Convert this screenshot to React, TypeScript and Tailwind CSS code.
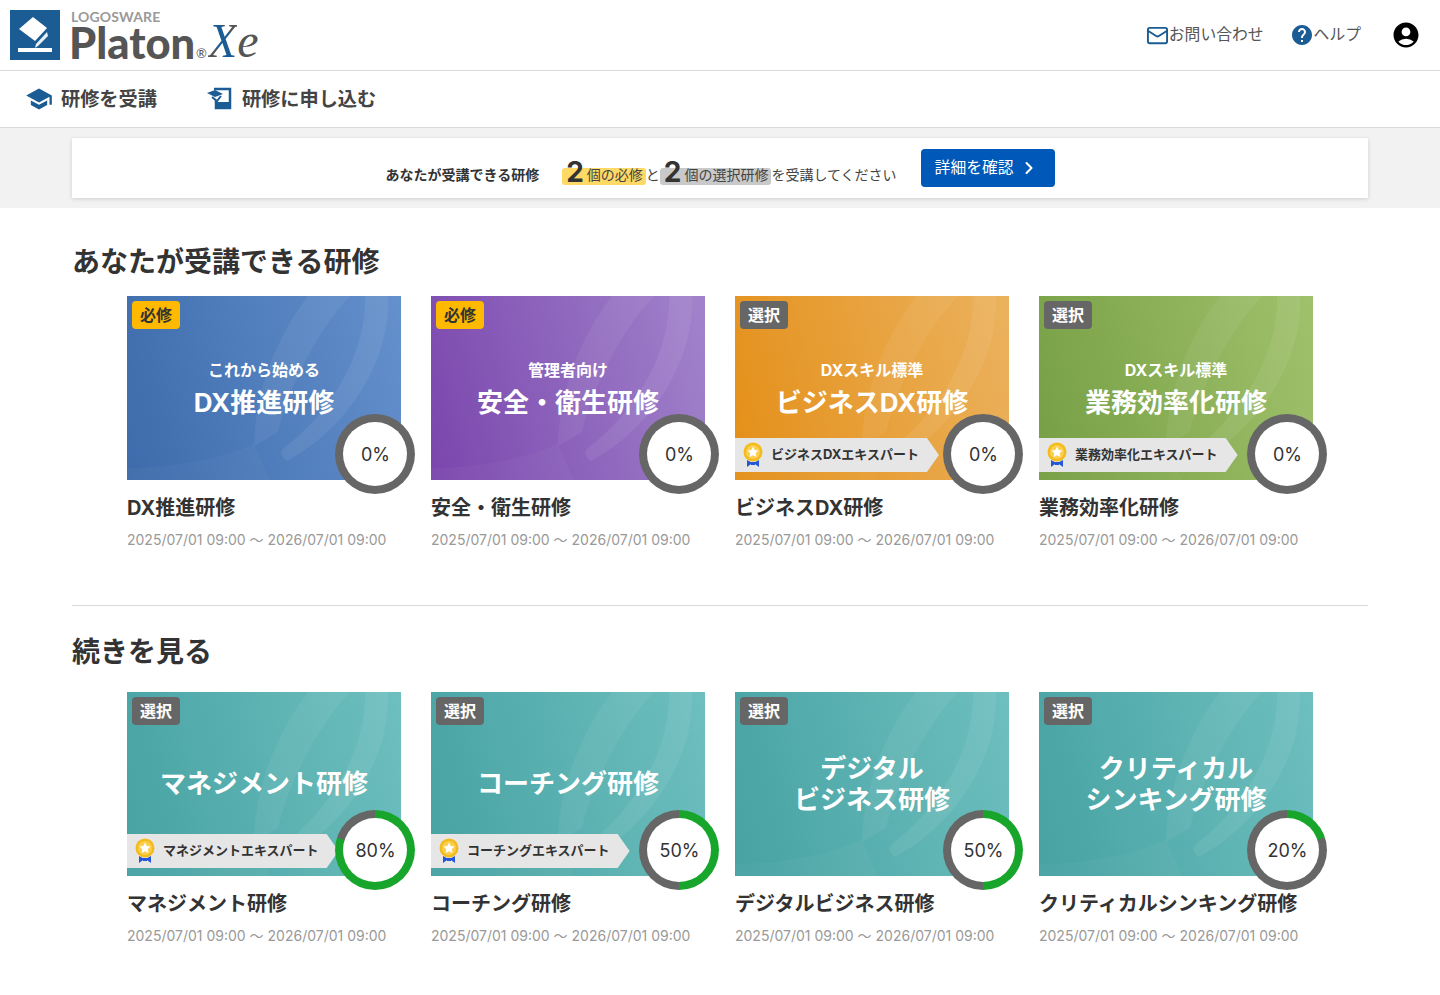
import { Mail, ChevronRight } from 'lucide-react';
import { MdAccountCircle, MdHelp, MdSchool } from 'react-icons/md';

const FONT = "font-['Inter','Noto_Sans_CJK_JP',sans-serif]";
const PERIOD = '2025/07/01 09:00 〜 2026/07/01 09:00';

type Course = {
  kind: '必修' | '選択';
  sub?: string;
  hero: string[];
  expert?: string;
  progress: number;
  title: string;
  gradient: string;
};

const available: Course[] = [
  { kind: '必修', sub: 'これから始める', hero: ['DX推進研修'], progress: 0, title: 'DX推進研修', gradient: 'from-[#3d6bab] to-[#6490cc]' },
  { kind: '必修', sub: '管理者向け', hero: ['安全・衛生研修'], progress: 0, title: '安全・衛生研修', gradient: 'from-[#7a46ad] to-[#a183cb]' },
  { kind: '選択', sub: 'DXスキル標準', hero: ['ビジネスDX研修'], expert: 'ビジネスDXエキスパート', progress: 0, title: 'ビジネスDX研修', gradient: 'from-[#e48f18] to-[#ebb25e]' },
  { kind: '選択', sub: 'DXスキル標準', hero: ['業務効率化研修'], expert: '業務効率化エキスパート', progress: 0, title: '業務効率化研修', gradient: 'from-[#769f44] to-[#a0c16c]' },
];

const resume: Course[] = [
  { kind: '選択', hero: ['マネジメント研修'], expert: 'マネジメントエキスパート', progress: 80, title: 'マネジメント研修', gradient: 'from-[#47a2a2] to-[#6ebfbf]' },
  { kind: '選択', hero: ['コーチング研修'], expert: 'コーチングエキスパート', progress: 50, title: 'コーチング研修', gradient: 'from-[#47a2a2] to-[#6ebfbf]' },
  { kind: '選択', hero: ['デジタル', 'ビジネス研修'], progress: 50, title: 'デジタルビジネス研修', gradient: 'from-[#47a2a2] to-[#6ebfbf]' },
  { kind: '選択', hero: ['クリティカル', 'シンキング研修'], progress: 20, title: 'クリティカルシンキング研修', gradient: 'from-[#47a2a2] to-[#6ebfbf]' },
];

const Swoosh = () => (
  <svg className="absolute inset-0 w-full h-full" viewBox="0 0 274 184" fill="white">
    <path d="M181 0 H223 C190 35 162 90 151 136 L127 150 C128 95 150 40 181 0 Z" fillOpacity="0.06" />
    <path d="M238 0 H261 C264 60 225 130 160 165 C154 160 152 156 157 152 C200 120 240 60 238 0 Z" fillOpacity="0.07" />
    <path d="M0 172 C50 172 95 162 127 148 L143 184 H0 Z" fillOpacity="0.03" />
  </svg>
);

const Medal = () => (
  <svg width="20" height="26" viewBox="0 0 20 26" className="shrink-0">
    <path d="M4 18 L9.5 21 L4 25 Z M16 18 L10.5 21 L16 25 Z" fill="#2456d6" />
    <path d="M8 20 H12 V23 H8 Z" fill="#2456d6" />
    <circle cx="10" cy="10" r="9.5" fill="#f4bb1d" />
    <circle cx="10" cy="10" r="7" fill="#fbcf4e" />
    <path d="M10 4.6 L11.7 8.1 L15.5 8.6 L12.7 11.2 L13.4 15 L10 13.2 L6.6 15 L7.3 11.2 L4.5 8.6 L8.3 8.1 Z" fill="white" />
  </svg>
);

const ProgressRing = ({ value }: { value: number }) => (
  <div
    className="absolute right-[-14px] bottom-[-14px] w-20 h-20 rounded-full flex items-center justify-center"
    style={{ background: `conic-gradient(#17a62b ${value * 3.6}deg, #666666 ${value * 3.6}deg)` }}
  >
    <div className="w-16 h-16 rounded-full bg-white flex items-center justify-center text-[18px] text-[#333] pl-px">
      {value}%
    </div>
  </div>
);

const CourseCard = ({ course }: { course: Course }) => (
  <div>
    <div className={`relative h-[184px] bg-linear-[75deg] ${course.gradient}`}>
      <Swoosh />
      <span
        className={`absolute left-[5px] top-[5px] w-12 h-7 rounded flex items-center justify-center text-[16px] font-bold ${
          course.kind === '必修' ? 'bg-[#ffb900] text-[#333]' : 'bg-[#666] text-white'
        }`}
      >
        {course.kind}
      </span>
      <div className={`absolute inset-x-0 text-center text-white ${course.sub ? 'top-[62px]' : course.hero.length > 1 ? 'top-[61px]' : 'top-[76px]'}`}>
        {course.sub && <div className="text-[16px] font-bold leading-6 mb-[5px]">{course.sub}</div>}
        {course.hero.map((line) => (
          <div key={line} className="text-[26px] font-bold leading-[31px]">
            {line}
          </div>
        ))}
      </div>
      {course.expert && (
        <div className="absolute left-0 bottom-2 h-[34px] pl-2 pr-5 flex items-center gap-2 bg-[#e6e6e6] text-[13px] font-bold text-[#333] [clip-path:polygon(0_0,calc(100%-12px)_0,100%_50%,calc(100%-12px)_100%,0_100%)]">
          <Medal />
          {course.expert}
        </div>
      )}
      <ProgressRing value={course.progress} />
    </div>
    <h3 className="mt-[14px] text-[20px] font-bold leading-7 text-[#333]">{course.title}</h3>
    <p className="mt-[8px] text-[14px] leading-5 text-[#999]">{PERIOD}</p>
  </div>
);

const CourseGrid = ({ items }: { items: Course[] }) => (
  <div className="grid grid-cols-[repeat(4,274px)] gap-x-[30px] px-[55px]">
    {items.map((c) => (
      <CourseCard key={c.title} course={c} />
    ))}
  </div>
);

const Logo = () => (
  <div className="flex items-start gap-[11px]">
    <div className="w-[50px] h-[50px] bg-[#1a5c93] shrink-0">
      <svg viewBox="0 0 50 50" className="w-full h-full">
        <path d="M9 19 L23 7 L37 18 L25 31 Z" fill="white" />
        <path d="M37 22 L26 34 L25 38 L28 36 L38 26 Z" fill="white" opacity="0.9" />
        <rect x="8" y="38" width="34" height="4" fill="white" />
      </svg>
    </div>
    <div className="relative h-[50px] w-[190px] font-['Lato',sans-serif]">
      <div className="absolute left-0 top-0 text-[14px] leading-[13px] tracking-[0.01em] font-bold text-[#999]">LOGOSWARE</div>
      <div className="absolute left-[-2px] top-[15px] text-[43.5px] leading-[35px] font-black text-[#555]">Platon</div>
      <div className="absolute left-[125px] top-[37px] text-[13px] leading-3 text-[#555]">®</div>
      <div className="absolute left-[137px] top-[11px] text-[48px] leading-[40px] italic font-['Liberation_Serif',serif]">
        <span className="bg-[linear-gradient(45deg,#555_32%,#1a5c93_32%,#1a5c93_68%,#555_68%)] bg-clip-text text-transparent">X</span>
        <span className="text-[#555]">e</span>
      </div>
    </div>
  </div>
);

export default function App() {
  return (
    <div className={`${FONT} min-h-[995px] bg-white text-[#333]`}>
      {/* Header */}
      <header className="h-[71px] border-b border-[#d9d9d9] pl-[10px] pr-[19px] pt-[10px] flex items-start justify-between">
        <Logo />
        <div className="flex items-center h-[50px] text-[15.8px] text-[#555]">
          <a className="flex items-center mr-[26px]">
            <Mail className="w-[23px] h-[23px] text-[#1a5c93]" strokeWidth={2} />
            お問い合わせ
          </a>
          <a className="flex items-center mr-[30px]">
            <MdHelp className="w-6 h-6 text-[#1a5c93]" />
            ヘルプ
          </a>
          <MdAccountCircle className="w-[30px] h-[30px] text-black" />
        </div>
      </header>

      {/* Nav */}
      <nav className="h-[57px] border-b border-[#d9d9d9] pl-[25px] flex items-center gap-[49px] text-[19.2px] font-bold text-[#444]">
        <a className="flex items-center gap-[8px]">
          <MdSchool className="w-7 h-7 text-[#1a5c93]" />
          研修を受講
        </a>
        <a className="flex items-center gap-[10px]">
          <svg width="26" height="24" viewBox="0 0 26 24" fill="none">
            <path d="M8 2 H24 V21 H10 V13" stroke="#1a5c93" strokeWidth="2.5" />
            <path d="M1 6 L9 3 L17 7 L9 10 Z" fill="#1a5c93" />
            <path d="M6 10 L11 14 L15 9" stroke="#1a5c93" strokeWidth="2" />
            <path d="M11 21 H24 V15 L11 15 Z" fill="#1a5c93" />
          </svg>
          研修に申し込む
        </a>
      </nav>

      {/* Notice */}
      <div className="h-[80px] bg-[#f2f2f2] px-[72px] py-[10px]">
        <div className="h-[60px] bg-white shadow-[0_1px_4px_rgba(0,0,0,0.15)] flex items-center justify-center">
          <div className="flex items-end h-[38px] text-[14px] text-[#444]">
            <span className="font-bold text-[#333] mr-[23px] leading-[20px] mb-[2px]">あなたが受講できる研修</span>
            <span className="relative flex items-end">
              <span className="absolute left-0 right-0 bottom-[2px] h-[17px] rounded-[3px] bg-[#ffd966]" />
              <span className="relative text-[28px] font-bold leading-[30px] ml-[4px] mr-[3px] text-[#333]">2</span>
              <span className="relative leading-[20px] pr-[3px] mb-[2px]">個の必修</span>
            </span>
            <span className="leading-[20px] mb-[2px]">と</span>
            <span className="relative flex items-end">
              <span className="absolute left-0 right-0 bottom-[2px] h-[17px] rounded-[3px] bg-[#c9c9c9]" />
              <span className="relative text-[28px] font-bold leading-[30px] ml-[4px] mr-[3px] text-[#333]">2</span>
              <span className="relative leading-[20px] pr-[3px] mb-[2px]">個の選択研修</span>
            </span>
            <span className="leading-[20px] mb-[2px]">を受講してください</span>
          </div>
          <button className="ml-[24px] w-[134px] h-[38px] rounded bg-[#0058b8] text-white text-[15.8px] flex items-center pl-[14px] gap-[5px]">
            詳細を確認
            <ChevronRight className="w-5 h-5" strokeWidth={2.5} />
          </button>
        </div>
      </div>

      <main className="mx-[72px]">
        {/* Available */}
        <section className="pt-[36px] pb-[55px] border-b border-[#d9d9d9]">
          <h2 className="text-[28px] font-bold leading-[36px] mb-[16px] text-[#333]">あなたが受講できる研修</h2>
          <CourseGrid items={available} />
        </section>

        {/* Resume */}
        <section className="pt-[28px]">
          <h2 className="text-[28px] font-bold leading-[36px] mb-[22px] text-[#333]">続きを見る</h2>
          <CourseGrid items={resume} />
        </section>
      </main>
    </div>
  );
}
